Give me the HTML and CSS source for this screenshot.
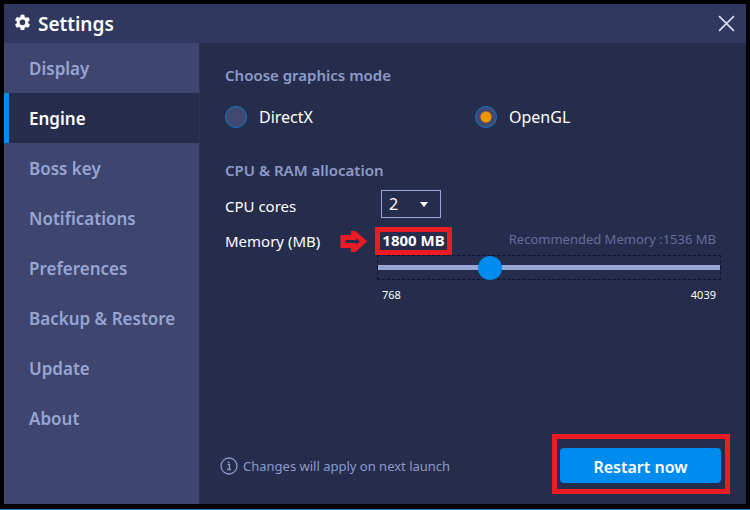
FILE: index.html
```html
<!DOCTYPE html>
<html lang="en">
<head>
  <meta charset="UTF-8">
  <meta name="viewport" content="width=device-width, initial-scale=1.0">
  <title>Settings</title>
  <link rel="stylesheet" href="styles.css">
</head>
<body>
  <div class="window">
    <header class="titlebar">
      <svg class="gear" viewBox="0 0 24 24" aria-hidden="true">
        <path fill-rule="evenodd" d="M9.500 1h5l.6 3.200 1.800 1.100 3.100-1.100 2.500 4.300-2.500 2.100v2.400l2.500 2.100-2.500 4.300-3.100-1.100-1.800 1.100-.6 3.300h-5l-.6-3.300-1.800-1.100-3.100 1.100-2.500-4.300L4 13V10.600L1.500 8.500 4 4.200l3.100 1.100 1.800-1.100zM12 7.800a4 4 0 1 0 0 8 4 4 0 0 0 0-8z"/>
      </svg>
      <h1>Settings</h1>
      <button type="button" class="close" aria-label="Close">
        <svg viewBox="0 0 16 16"><path d="M1 1l14 14M15 1L1 15"/></svg>
      </button>
    </header>

    <nav class="sidebar">
      <a href="#display">Display</a>
      <a href="#engine" class="active">Engine</a>
      <a href="#bosskey">Boss key</a>
      <a href="#notifications">Notifications</a>
      <a href="#preferences">Preferences</a>
      <a href="#backup">Backup &amp; Restore</a>
      <a href="#update">Update</a>
      <a href="#about">About</a>
    </nav>

    <main class="panel">
      <h2>Choose graphics mode</h2>
      <div class="modes">
        <label><input type="radio" name="mode" value="directx">DirectX</label>
        <label><input type="radio" name="mode" value="opengl" checked>OpenGL</label>
      </div>

      <h2 class="allocation">CPU &amp; RAM allocation</h2>
      <div class="row cpu">
        <label for="cores">CPU cores</label>
        <div class="select">
          <select id="cores">
            <option>1</option>
            <option selected>2</option>
            <option>4</option>
          </select>
          <svg viewBox="0 0 8 5" aria-hidden="true"><path d="M0 0h8L4 5z"/></svg>
        </div>
      </div>
      <div class="row memory">
        <label for="memory">Memory (MB)
          <svg class="arrow" viewBox="0 0 28 23" aria-hidden="true"><path d="M3 7.500h10.500V3.500h1l9 8-9 8h-1V15.500H3z"/></svg>
        </label>
        <div class="values">
          <output for="memory" class="marked">1800 MB</output>
          <span class="hint">Recommended Memory :1536 MB</span>
        </div>
      </div>
      <div class="slider">
        <input type="range" id="memory" min="768" max="4039" value="1800">
        <div class="limits"><span>768</span><span>4039</span></div>
      </div>

      <footer class="footer">
        <svg class="info" viewBox="0 0 18 18" aria-hidden="true">
          <circle cx="9" cy="9" r="8"/>
          <path d="M7.500 7.500H9.500V12.500M7 12.500h4M8.500 4.500v1.500"/>
        </svg>
        <span>Changes will apply on next launch</span>
        <div class="marked restart">
          <button type="button">Restart now</button>
        </div>
      </footer>
    </main>
  </div>
</body>
</html>
```

FILE: styles.css
```css
* { box-sizing: border-box; }

body {
  margin: 0;
  min-height: 100vh;
  display: flex;
  padding: 4px 4px 5px;
  background: #000;
  border-bottom: 1px solid #1a8ccc;
  color: #fff;
  font: 16px/24px "Noto Sans", "Open Sans", sans-serif;
}

h1, h2 { margin: 0; font-weight: 600; }
button, select, input { margin: 0; font: inherit; color: inherit; }

.window {
  flex: 1;
  display: grid;
  grid-template: 39px 1fr / 196px 1fr;
  background: #262c4b;
}

/* title bar */
.titlebar {
  grid-column: 1 / 3;
  display: flex;
  align-items: center;
  padding: 0 11px 0 10px;
  background: #31385f;
}
.titlebar h1 { margin-left: 7px; font-size: 19px; }
.gear { width: 17px; height: 17px; margin-bottom: 2px; fill: #fff; }
.close {
  display: flex;
  margin-left: auto;
  padding: 0;
  background: none;
  border: 0;
}
.close svg { width: 17px; height: 17px; stroke: #dcdcf2; stroke-width: 1.5; }

/* sidebar */
.sidebar { background: #3e456f; border-right: 1px solid #2d3356; }
.sidebar a {
  display: block;
  height: 50px;
  padding-left: 20px;
  border-left: 5px solid transparent;
  color: #97a5d3;
  font-size: 17px;
  font-weight: 600;
  line-height: 52px;
  text-decoration: none;
}
.sidebar .active { background: #262c4b; border-left-color: #008bef; color: #fff; }

/* engine panel */
.panel { display: flex; flex-direction: column; padding: 20px 25px 10px; }
.panel h2 { color: #8d9bc9; font-size: 15px; }
.panel .allocation { margin-top: 29px; }

.modes { display: grid; grid-template-columns: 250px 1fr; margin-top: 18px; }
.modes label { display: flex; align-items: center; gap: 12px; }
.modes input {
  appearance: none;
  width: 22px;
  height: 22px;
  border: 1px solid #0f76c8;
  border-radius: 50%;
  background: #424970;
}
.modes input:checked { background: radial-gradient(circle, #f29400 5px, #424970 6px); }

.row { display: grid; grid-template-columns: 150px 1fr; align-items: center; font-size: 15px; }
.cpu { margin-top: 8px; }
.cpu label { padding-top: 4px; }
.select { position: relative; width: 60px; margin-left: 6px; }
.select select {
  display: block;
  appearance: none;
  width: 100%;
  height: 28px;
  padding: 0 7px;
  border: 1px solid #97a5d3;
  border-radius: 0;
  background: #262c4b;
  font-size: 16px;
}
.select svg { position: absolute; top: 12px; right: 13px; width: 8px; height: 5px; fill: #fff; pointer-events: none; }

.memory { margin-top: 9px; }
.memory label { display: flex; align-items: center; justify-content: space-between; padding-right: 7px; }
.arrow { width: 28px; height: 23px; fill: none; stroke: #ed1c24; stroke-width: 5; }
.values { display: flex; justify-content: space-between; padding-right: 5px; }
.marked { border: 5px solid #ed1c24; }
output.marked { width: 77px; height: 28px; font-weight: 700; line-height: 16px; text-align: center; white-space: nowrap; }
.hint { color: #656d99; font-size: 13px; }

.slider { margin-left: 152px; }
.slider input {
  display: block;
  appearance: none;
  width: 100%;
  height: 25px;
  border: 1px dashed #10142a;
  background: linear-gradient(#97a5d3, #97a5d3) center / 100% 5px no-repeat;
}
.slider input::-webkit-slider-thumb {
  appearance: none;
  width: 24px;
  height: 24px;
  border-radius: 50%;
  background: #008bef;
}
.limits { display: flex; justify-content: space-between; padding: 7px 5px 0; font-size: 11px; line-height: 16px; }

/* footer */
.footer { display: flex; align-items: center; margin: auto -9px 0 -5px; color: #8d9bc9; font-size: 13px; }
.footer > span { margin-left: 5px; padding-top: 4px; }
.info { width: 18px; height: 18px; margin-top: 4px; fill: none; stroke: #8d9bc9; stroke-width: 1.3; }
.restart { margin-left: auto; padding: 9px 4px 6px 3px; }
.restart button {
  display: block;
  width: 161px;
  height: 35px;
  padding: 2px 0 0;
  border: 0;
  border-radius: 4px;
  background: #008bef;
  color: #fff;
  font-size: 16px;
  font-weight: 600;
}
```
